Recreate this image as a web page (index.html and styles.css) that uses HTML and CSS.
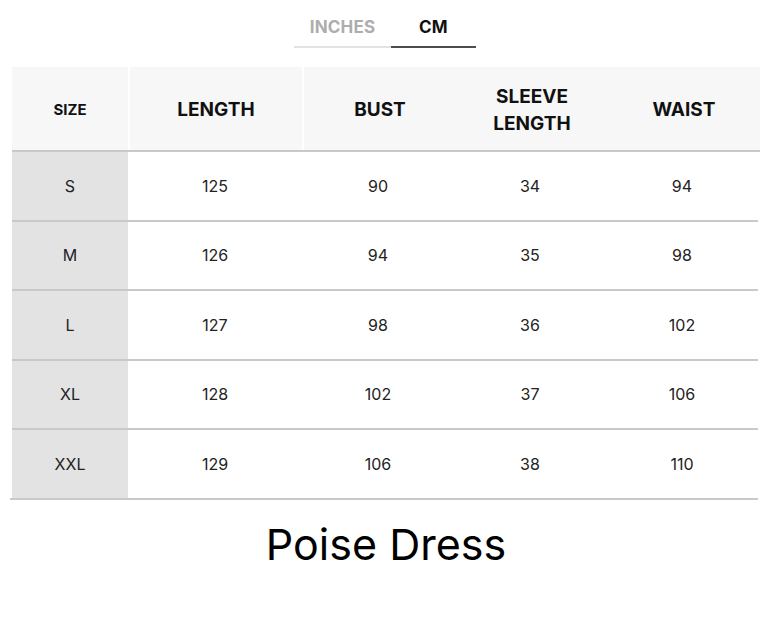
FILE: index.html
```html
<!DOCTYPE html>
<html lang="en">
<head>
<meta charset="utf-8">
<title>Poise Dress - Size Chart</title>
<link rel="stylesheet" href="styles.css">
</head>
<body>
<div class="page">
  <div class="tabs">
    <div class="tab tab-inches">INCHES</div>
    <div class="tab tab-cm active">CM</div>
  </div>
  <div class="chart">
    <div class="row head">
      <div class="cell c-size">SIZE</div>
      <div class="cell c-len sep">LENGTH</div>
      <div class="cell c-rest sep">BUST</div>
      <div class="cell c-rest">SLEEVE<br>LENGTH</div>
      <div class="cell c-rest">WAIST</div>
    </div>
    <div class="row body">
      <div class="cell c-size">S</div>
      <div class="cell c-len">125</div>
      <div class="cell c-rest">90</div>
      <div class="cell c-rest">34</div>
      <div class="cell c-rest">94</div>
    </div>
    <div class="row body">
      <div class="cell c-size">M</div>
      <div class="cell c-len">126</div>
      <div class="cell c-rest">94</div>
      <div class="cell c-rest">35</div>
      <div class="cell c-rest">98</div>
    </div>
    <div class="row body">
      <div class="cell c-size">L</div>
      <div class="cell c-len">127</div>
      <div class="cell c-rest">98</div>
      <div class="cell c-rest">36</div>
      <div class="cell c-rest">102</div>
    </div>
    <div class="row body">
      <div class="cell c-size">XL</div>
      <div class="cell c-len">128</div>
      <div class="cell c-rest">102</div>
      <div class="cell c-rest">37</div>
      <div class="cell c-rest">106</div>
    </div>
    <div class="row body last">
      <div class="cell c-size">XXL</div>
      <div class="cell c-len">129</div>
      <div class="cell c-rest">106</div>
      <div class="cell c-rest">38</div>
      <div class="cell c-rest">110</div>
    </div>
  </div>
  <h1 class="title">Poise Dress</h1>
</div>
</body>
</html>
```

FILE: styles.css
```css
* { box-sizing: border-box; }
html, body { margin: 0; padding: 0; background: #fff; }
body {
  font-family: Inter, "Noto Sans", "Liberation Sans", sans-serif;
  color: #111;
}
.page {
  width: 771px;
  padding: 0 11px 0 12px;
}
.tabs {
  display: flex;
  padding-top: 15px;
  margin-left: 282px;
  width: 182px;
}
.tab {
  height: 33px;
  font-size: 17px;
  font-weight: 700;
  text-align: center;
  line-height: 24px;
  border-bottom: 2px solid #e2e2e2;
  letter-spacing: 0.2px;
}
.tab-inches { width: 97px; color: #adadad; }
.tab-cm { width: 85px; color: #111; }
.tab.active { border-bottom-color: #4d4d4d; }
.chart {
  margin-top: 19px;
  width: 748px;
}
.row {
  display: flex;
  border-bottom: 2px solid #c5cacd;
}
.row.head {
  height: 85px;
  background: #f7f7f7;
}
.row.body {
  height: 69.5px;
  width: 746px;
}
.row.last {
  width: 748px;
  margin-left: -2px;
  padding-left: 2px;
}
.cell {
  display: flex;
  align-items: center;
  justify-content: center;
  text-align: center;
}
.head .cell {
  font-weight: 700;
  font-size: 19px;
  line-height: 27px;
  color: #111;
  padding-top: 2px;
}
.head .c-size { font-size: 15px; }
.body .cell {
  font-size: 16px;
  color: #222;
}
.c-size { width: 116px; flex: none; }
.c-len { width: 174px; flex: none; }
.c-rest { flex: 1 1 0; }
.head .sep { border-left: 2px solid #ffffff; }
.body .c-size { background: #e3e3e3; }
.title {
  margin: 17px 0 0;
  text-align: center;
  font-weight: 400;
  font-size: 43px;
  line-height: 54px;
  color: #000;
}
```
